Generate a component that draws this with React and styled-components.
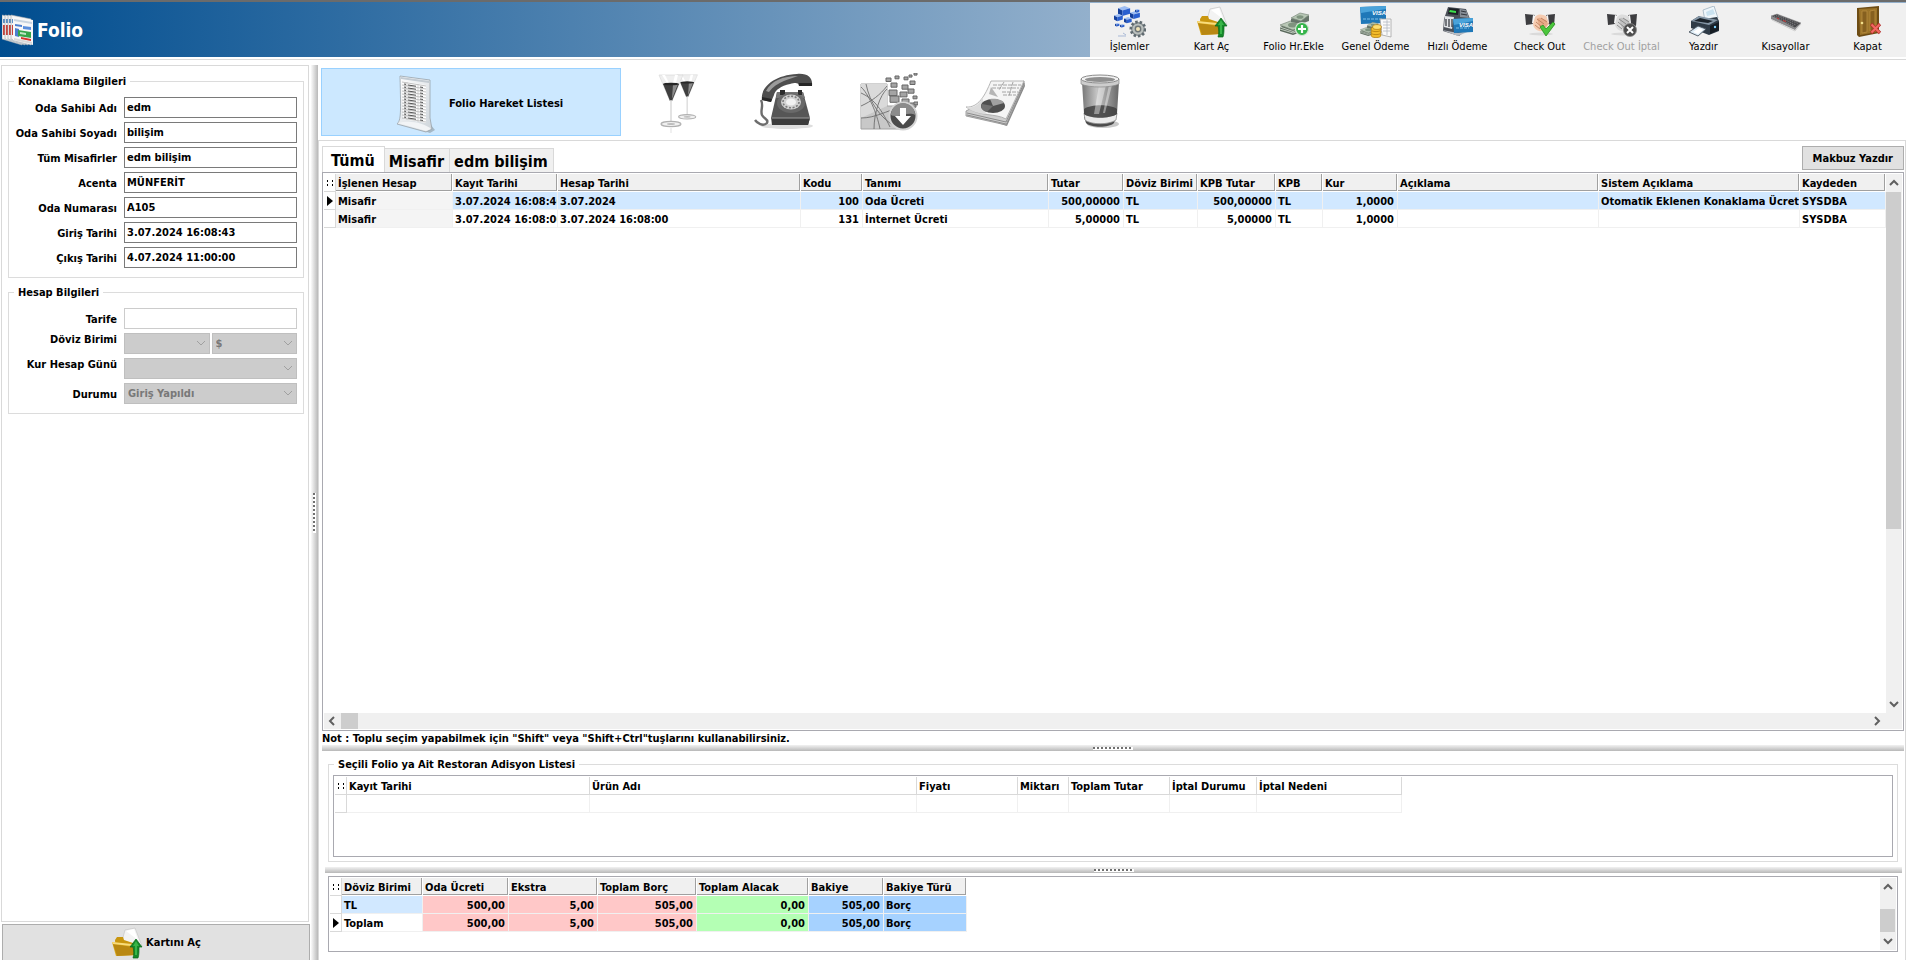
import React, { useState } from "react";
import styled, { createGlobalStyle, css } from "styled-components";

const GlobalStyle = createGlobalStyle`
  * {
    box-sizing: border-box;
  }
  body {
    margin: 0;
    background: #fff;
    color: #000;
    font-family: "DejaVu Sans Condensed", "DejaVu Sans", Tahoma, sans-serif;
    font-size: 11px;
    line-height: 14px;
  }
  button, input, select {
    font: inherit;
    color: inherit;
  }
`;

/* ---------- icons ---------- */

const FolioLogo = () => (
  <svg width="32" height="32" viewBox="0 0 32 32">
    {[0, 3, 6, 9].map((x) => (
      <g key={x}>
        <path d={`M${x} 1 L${x + 20} 5 V31 L${x} 25 Z`} fill="#f3f3f3" stroke="#9aa4ad" strokeWidth=".6" />
        <path d={`M${x + 1} 5h2v4h-2z`} fill="#5b8fc4" />
        <path d={`M${x + 1} 11h2v10h-2z`} fill="#c8443c" />
      </g>
    ))}
    <path d="M11 3 L31 6 V31 L11 26 Z" fill="#f7f7f7" />
    <path d="M12 5 L30 8 V10 L12 7 Z" fill="#c8d4e0" />
    <path d="M13 10 L20 11 V13 L13 12 Z M13 14 L17 15 V23 L13 22 Z" fill="#4c7fd0" />
    <path d="M21 12 L29 13 V16 L21 15 Z" fill="#5a8fdd" />
    <path d="M16 16 L29 18 V24 L16 22 Z" fill="#35a64a" />
    <path d="M18 18 L24 19 V21 L18 20 Z" fill="#bfe6c4" />
    <path d="M19 23 L29 25 V27 L19 25 Z" fill="#d3352c" />
    <path d="M12 24 L30 28 V30 L12 26 Z" fill="#d9d9d9" />
  </svg>
);

const Cube = ({ x, y, s }) => (
  <g transform={`translate(${x} ${y}) scale(${s})`}>
    <path d="M0 2 L6 0 L11 2 L4 4 Z" fill="#9dbdf3" />
    <path d="M0 2 L4 4 V9 L0 7 Z" fill="#143f9c" />
    <path d="M4 4 L11 2 V7 L4 9 Z" fill="#2a5fcf" />
  </g>
);

const OperationsIcon = () => (
  <svg width="32" height="32" viewBox="0 0 32 32">
    <Cube x={4} y={0} s={1.1} />
    <Cube x={16} y={5} s={0.9} />
    <Cube x={0} y={8} s={0.8} />
    <Cube x={10} y={11} s={0.7} />
    <Cube x={21} y={3} s={0.4} />
    <Cube x={1} y={17} s={0.4} />
    <Cube x={6} y={18} s={0.4} />
    <path d="M4 30 h8 M9 27l3 2" stroke="#a9b9d6" strokeWidth="1" />
    <circle cx="24" cy="23" r="7" fill="#8c9294" stroke="#5f6a70" strokeWidth="3" strokeDasharray="2.4 1.9" />
    <circle cx="24" cy="23" r="5.6" fill="#b9bfbd" />
    <circle cx="24" cy="23" r="3.4" fill="#6d7476" />
    <circle cx="24" cy="23" r="2" fill="#efe2b8" />
  </svg>
);

const FolderUpIcon = () => (
  <svg width="32" height="32" viewBox="0 0 32 32">
    <path d="M14 3 L24 1 L31 19 L18 24 L11 14 Z" fill="#f3f3f3" stroke="#c6c6c6" strokeWidth=".7" />
    <path d="M15 4 L23 2 L27 13 Z" fill="#fff" />
    <path d="M4 13 L6 10 H12 L13 13 L22 16 V26 L5 27 Z" fill="#c9960f" />
    <path d="M1 15 L22 18 L25 28 L5 29 Z" fill="#dba91b" />
    <path d="M2 17 L22 20 L25 28 L6 29 Z" fill="#b98812" />
    <path d="M1 15 L21 17 V19 L2 17 Z" fill="#f8dc7c" />
    <path d="M25 12 L31 20 H28 C28 25 28 28 27 31 L22 31 C23 28 23 24 22 20 H19 Z" fill="#15882a" stroke="#0a6718" strokeWidth=".7" />
    <path d="M25 14 L28 19 H26 V28 H24 V19 H22 Z" fill="#38b548" />
  </svg>
);

const Banknotes = () => (
  <g>
    <path d="M2 21 L15 15 L28 19 V24 L15 29 L2 25 Z" fill="#5b6a5d" />
    <path d="M2 19 L15 14 L28 18 L15 24 Z" fill="#b9c7b6" stroke="#7d8b7c" strokeWidth=".7" />
    <path d="M2 23 L15 27 L28 22 M2 21 L15 25.500 L28 20" stroke="#dbe3d8" strokeWidth=".8" fill="none" />
    <path d="M13 13 L22 8 L31 10 V15 L23 18 L13 16 Z" fill="#66756a" />
    <path d="M13 12 L22 7 L31 9 L23 15 Z" fill="#b6c6b4" stroke="#7d8b7c" strokeWidth=".7" />
    <ellipse cx="15" cy="19" rx="5" ry="2.500" fill="#7f947f" />
    <ellipse cx="22" cy="11" rx="3.500" ry="1.800" fill="#7f947f" />
  </g>
);

const CashAddIcon = () => (
  <svg width="32" height="32" viewBox="0 0 32 32">
    <Banknotes />
    <circle cx="24" cy="23" r="6.500" fill="#35b44a" stroke="#d7e5d8" strokeWidth="1.200" />
    <path d="M24 19v8M20 23h8" stroke="#fff" strokeWidth="2.200" />
  </svg>
);

const VisaCard = ({ x = 0, y = 0, w = 24, h = 15 }) => (
  <g transform={`translate(${x} ${y})`}>
    <path d={`M0 1 L${w} 0 V${h} L1 ${h + 1} Z`} fill="#1f78b8" />
    <path d={`M0 1 L${w} 0 V3 L1 7 Z`} fill="#4aa3da" />
    <path d={`M3 ${h - 4} H${w - 4}`} stroke="#7fbfe6" strokeWidth="1" strokeDasharray="3 1" />
    <text x={w - 14} y="9" fontSize="6" fontWeight="700" fontStyle="italic" fontFamily="Liberation Sans, sans-serif" fill="#fff">
      VISA
    </text>
  </g>
);

const GeneralPaymentIcon = () => (
  <svg width="34" height="32" viewBox="0 0 34 32">
    <VisaCard x={1} y={0} w={26} h={17} />
    <path d="M21 13 L32 13 V31 L23 29 Z" fill="#fafafa" stroke="#a5a5a5" strokeWidth=".8" />
    <path d="M24 16h7M24 19h7M24 22h7M24 25h7M28 14v15" stroke="#b3b9c2" strokeWidth=".8" />
    <g transform="translate(0 12) scale(.62)">
      <Banknotes />
    </g>
    {[29, 26, 23].map((y) => (
      <ellipse key={y} cx="17" cy={y} rx="5" ry="2.600" fill="#f2bb2b" stroke="#a87408" strokeWidth=".7" />
    ))}
    <ellipse cx="18" cy="21" rx="4.400" ry="2.400" fill="#ffdf72" stroke="#a87408" strokeWidth=".7" />
  </svg>
);

const FastPaymentIcon = () => (
  <svg width="34" height="32" viewBox="0 0 34 32">
    <path d="M7 1 L25 3 L29 13 L24 25 L18 30 L2 25 L3 13 Z" fill="#4b5058" />
    <path d="M8 2 L18 3 L17 9 L7 8 Z" fill="#1d2125" />
    <path d="M9 4 L15 5 V7 L8 6 Z" fill="#3ee04c" />
    <path d="M19 3 L25 4 L28 12 L19 11 Z" fill="#868d96" />
    <path d="M20 5 L25 6 M20 8 L26 9" stroke="#2f343a" strokeWidth="1" />
    <path d="M4 10 L13 11 L11 23 L3 21 Z" fill="#e2e4e7" />
    <path d="M5 13v7M8 13v8M11 13v8" stroke="#2c3036" strokeWidth="1.200" />
    <path d="M1 24 L17 30 L31 24 L17 27 Z" fill="#b8bcc2" />
    <VisaCard x={12} y={12} w={20} h={14} />
  </svg>
);

const Handshake = ({ skin, shade, line }) => (
  <g>
    <path d="M1 8 L11 9 L9 18 L2 19 Z" fill="#3d3d40" />
    <path d="M31 8 L22 9 L24 18 L30 20 Z" fill="#3d3d40" />
    <path d="M9 9 L12 10 L10 18 L8 17 Z M24 9 L22 10 L24 17 L25 17 Z" fill="#f7f7f7" />
    <path d="M11 11 C15 7 19 9 22 10 L25 17 C23 23 19 26 15 25 C12 24 9 21 9 18 Z" fill={skin} />
    <path d="M13 13 C16 10 18 13 22 14 L24 18 C22 22 19 23 16 22 Z" fill={shade} />
    <path d="M13 13 L20 18 M12 16 L18 21 M11 19 L16 23 M17 12 L23 16" stroke={line} strokeWidth=".8" fill="none" />
    <ellipse cx="17" cy="28" rx="12" ry="1.500" fill="#dadada" />
  </g>
);

const CheckOutIcon = () => (
  <svg width="32" height="32" viewBox="0 0 32 32">
    <Handshake skin="#f5cbb0" shade="#e8ab88" line="#b87654" />
    <path d="M16 21 L19 19 L22 23 L29 16 L31 18 L22 30 Z" fill="#4bc63c" stroke="#2b8f22" strokeWidth=".8" />
  </svg>
);

const CheckOutCancelIcon = () => (
  <svg width="32" height="32" viewBox="0 0 32 32">
    <Handshake skin="#dcdcdc" shade="#c2c2c2" line="#7c7c7c" />
    <circle cx="24" cy="24" r="6.500" fill="#4d4d4d" stroke="#8a8a8a" strokeWidth=".8" />
    <path d="M21 21l6 6M27 21l-6 6" stroke="#fff" strokeWidth="2" />
  </svg>
);

const PrinterIcon = () => (
  <svg width="34" height="32" viewBox="0 0 34 32">
    <path d="M16 4 L27 0 L31 12 L18 15 Z" fill="#eef6fb" stroke="#9fb3c0" strokeWidth=".8" />
    <path d="M19 6 L26 3 L28 8 L20 10 Z" fill="#c9e2f0" />
    <path d="M4 15 L12 10 L17 13 L30 11 L32 15 V25 L22 29 L4 22 Z" fill="#2e3b47" />
    <path d="M4 15 L12 10 L31 14 L22 19 Z" fill="#8496a6" />
    <path d="M7 15 L13 12 L26 15 L21 17 Z" fill="#1b242c" />
    <path d="M23 20 L32 16 V24 L23 28 Z" fill="#161d24" />
    <circle cx="28" cy="21" r="1.200" fill="#7fd2ff" />
    <path d="M2 26 L11 20 L19 23 L11 30 Z" fill="#dcebf5" stroke="#4a5560" strokeWidth=".9" />
    <path d="M6 26 L12 22 L16 24 L11 28 Z" fill="#fff" />
  </svg>
);

const KeyboardIcon = () => (
  <svg width="32" height="32" viewBox="0 0 32 32">
    <path d="M1 10 L7 8 L31 17 L25 24 L1 13 Z" fill="#8a8a8c" />
    <path d="M1 10 L7 8 L31 17 L25 22 Z" fill="#48484b" stroke="#a4a4a6" strokeWidth=".6" />
    <path d="M4 10.500 L24 20 M6 9.500 L26 19 M8 9 L28 17.500" stroke="#8b8b8f" strokeWidth=".8" strokeDasharray="1.500 1" />
    <path d="M7 12 l2 1 M13 14.500 l3 1" stroke="#c43a3a" strokeWidth="1.200" />
    <path d="M2 14 L25 25 L31 18" stroke="#d0d0d0" strokeWidth="1" fill="none" />
  </svg>
);

const DoorIcon = () => (
  <svg width="32" height="32" viewBox="0 0 32 32">
    <path d="M5 2 L27 0 V27 L7 31 L5 29 Z" fill="#6d4c14" />
    <path d="M7 3 L25 2 V26 L8 29 Z" fill="#9c7429" />
    <path d="M10 5 L15 5 V26 L10 27 Z M18 5 L23 4 V24 L18 25 Z" fill="#86601f" stroke="#b78d40" strokeWidth=".8" />
    <circle cx="10" cy="17" r="1.300" fill="#f3e08b" />
    <path d="M19 18l9 9M28 18l-9 9" stroke="#b5302c" strokeWidth="3.200" />
    <path d="M19.500 18.500l8 8M27.500 18.500l-8 8" stroke="#f26a64" strokeWidth="2" />
  </svg>
);

const ListIcon = () => (
  <svg width="40" height="60" viewBox="0 0 40 60">
    <defs>
      <linearGradient id="sheet" x1="0" y1="0" x2="1" y2="1">
        <stop offset="0" stopColor="#fff" />
        <stop offset="1" stopColor="#cdd4da" />
      </linearGradient>
    </defs>
    <path d="M4 49 L34 59 L39 56 L34 50 Z" fill="#a5b8c6" />
    <path d="M4 2 L34 6 L34 44 L36 55 L30 58 L1 50 C5 46 5 40 4 2 Z" fill="url(#sheet)" stroke="#98a2aa" strokeWidth=".8" />
    <path d="M5 3 L33 7 V9 L5 5 Z" fill="#c3cbd2" />
    <path d="M6 7 L30 11 V49 L7 45 Z" fill="#fdfdfd" />
    {[8, 11, 14, 17, 20, 23, 26, 29, 32, 35, 38, 41, 44].map((y) => (
      <path key={y} d={`M6 ${y} l24 4`} stroke="#a8a8a8" strokeWidth=".7" />
    ))}
    {[9, 12, 15, 18, 21, 24, 27, 30, 33, 36, 39, 42].map((y) => (
      <path key={y} d={`M8 ${y + 1} l2 .4 M12 ${y + 2} l8 1.200 M24 ${y + 4} l3 .5`} stroke="#555" strokeWidth="1.100" />
    ))}
    <path d="M11 8 V46 M22 10 V48" stroke="#bdbdbd" strokeWidth=".6" />
    <path d="M2 49 C14 46 28 49 35 55 L30 57 Z" fill="#f2f4f6" />
  </svg>
);

const GlassShape = () => (
  <g>
    <path d="M1 2 H25 L14 28 H12 Z" fill="#efefef" stroke="#dadada" strokeWidth=".7" />
    <path d="M5 11 H21 L14 28 H12 Z" fill="#3f3f3f" />
    <path d="M15 11 H20 L14 26 Z" fill="#8c8c8c" />
    <path d="M7 2 L11 10 H9 L4 2 Z M17 2h3l-2 8h-3z" fill="#fff" />
    <ellipse cx="13" cy="11" rx="8" ry="1.300" fill="#262626" />
    <path d="M13 27 V51" stroke="#dcdcdc" strokeWidth="1.600" />
    <ellipse cx="13" cy="51" rx="10" ry="2.600" fill="#f0f0f0" stroke="#b0b0b0" strokeWidth="1.200" />
    <ellipse cx="13" cy="51" rx="4" ry="1" fill="#bdbdbd" />
  </g>
);

const GlassesIcon = () => (
  <svg width="60" height="60" viewBox="0 0 60 60">
    <g transform="translate(29 0) scale(.86)">
      <GlassShape />
    </g>
    <g transform="translate(11 0)">
      <GlassShape />
    </g>
    <path d="M24 54 V60" stroke="#f0f0f0" strokeWidth="2" />
  </svg>
);

const PhoneIcon = () => (
  <svg width="60" height="60" viewBox="0 0 60 60">
    <ellipse cx="34" cy="53" rx="26" ry="3" fill="#dedede" />
    <path d="M8 27 C11 33 7 37 9 42 C11 46 16 46 14 50 C10 54 4 50 2 47" fill="none" stroke="#6d6d6d" strokeWidth="2.400" />
    <path d="M24 19 H50 L57 45 L55 52 H19 L18 45 Z" fill="#565656" />
    <path d="M19 45 H57 L55 52 H19 Z" fill="#3d3d3d" />
    <path d="M19 45 H57" stroke="#9a9a9a" strokeWidth="1" />
    <path d="M24 19 H50 L52 25 H23 Z" fill="#747474" />
    <path d="M27 22 V17 H32 V22 M45 22 V17 H49 V22" fill="#2c2c2c" />
    <ellipse cx="38" cy="30" rx="14" ry="10" fill="#696969" />
    <ellipse cx="38" cy="29" rx="10" ry="7.500" fill="#d2d2d2" />
    <ellipse cx="38" cy="29" rx="8" ry="5.800" fill="none" stroke="#7c7c7c" strokeWidth="1.600" strokeDasharray="2 1.600" />
    <ellipse cx="38" cy="29" rx="5" ry="3.600" fill="#f2f2f2" />
    <path d="M9 27 C7 14 22 2 44 1 C55 0 60 5 59 13 L46 13 C45 9 42 10 37 11 C28 13 22 17 21 22 L18 29 Z" fill="#4e4e4e" />
    <path d="M13 18 C18 8 30 3 45 3 C38 6 24 8 16 19 Z" fill="#9b9b9b" />
    <path d="M46 10 H59 V13 H46 Z M9 24 L19 26 L18 29 L9 27 Z" fill="#272727" />
  </svg>
);

const NetworkIcon = () => (
  <svg width="58" height="60" viewBox="0 0 58 60">
    <path d="M1 11 H27 V33 H44 V56 H1 Z" fill="#c8c8c8" stroke="#a2a2a2" strokeWidth="1" />
    <path d="M1 11 H27 V33 L1 45 Z" fill="#dadada" />
    <path
      d="M1 20 C12 25 20 33 30 54 M1 33 C12 28 20 22 27 13 M6 11 C10 30 20 45 36 54 M1 45 C15 45 27 38 40 34 M14 56 C14 40 20 22 27 16 M20 56 C17 40 8 20 1 14"
      fill="none"
      stroke="#6e6e6e"
      strokeWidth=".9"
    />
    {[
      [26, 5, 5], [35, 3, 4], [44, 4, 4], [49, 2, 3], [54, 0, 3], [31, 10, 6], [42, 12, 6], [50, 8, 5],
      [29, 17, 8], [40, 19, 7], [48, 16, 6], [30, 23, 9], [42, 26, 7], [53, 23, 4], [50, 30, 6], [54, 29, 4],
    ].map(([x, y, s]) => (
      <path key={`${x}-${y}`} d={`M${x} ${y} h${s} v${s * 0.7} h-${s} z`} fill="#a4a4a4" stroke="#676767" strokeWidth="1" />
    ))}
    <circle cx="43" cy="43" r="13.500" fill="#4b4b4b" stroke="#d4d4d4" strokeWidth="2" />
    <path d="M31 42 A12 12 0 0 1 55 42 C48 38 38 46 31 42 Z" fill="#8c8c8c" />
    <path d="M40 35 H46 V43 H51 L43 52 L35 43 H40 Z" fill="#fff" />
  </svg>
);

const ReportIcon = () => (
  <svg width="60" height="60" viewBox="0 0 60 60">
    <path d="M2 40 L42 53 L60 13 L59 9 L40 44 Z" fill="#8a8a8a" />
    <path d="M1 38 V43 L41 52 L59 12 V8 Z" fill="#cfcfcf" stroke="#8e8e8e" strokeWidth=".8" />
    <path d="M2 40 L41 49 L59 10 M2 42 L41 51" fill="none" stroke="#7a7a7a" strokeWidth=".8" />
    <path d="M26 8 L59 8 L41 46 C30 40 15 44 1 34 C13 35 20 23 26 8 Z" fill="#f5f5f5" stroke="#a5a5a5" strokeWidth=".8" />
    <path d="M1 34 C10 36 15 30 18 24 C18 32 18 38 22 41 C14 41 6 38 1 34 Z" fill="#dcdcdc" />
    <path d="M28 12 H56 M27 15 H54 M37 19 H53 M38 22 H51 M39 9 L34 17 M48 9 L44 23" stroke="#9c9c9c" strokeWidth=".9" strokeDasharray="4 1" />
    <ellipse cx="28" cy="33" rx="12" ry="7" fill="#4f4f4f" />
    <path d="M28 33 L25 26 C31 25 38 27 39 30 Z" fill="#a0a0a0" />
    <path d="M28 33 L22 39 C17 38 15 34 17 31 Z" fill="#717171" />
    <path d="M26 14 L24 21 L33 24 Z" fill="#b5b5b5" />
  </svg>
);

const TrashIcon = () => (
  <svg width="44" height="60" viewBox="0 0 44 60">
    <defs>
      <linearGradient id="bin" x1="0" x2="1">
        <stop offset="0" stopColor="#777" />
        <stop offset=".4" stopColor="#c4c4c4" />
        <stop offset="1" stopColor="#686868" />
      </linearGradient>
    </defs>
    <ellipse cx="24" cy="51" rx="16" ry="4" fill="#c8c8c8" />
    <path d="M5 44 H37 L35 50 C30 55 12 55 7 50 Z" fill="#4b4b4b" />
    <path d="M5 40 H38 L37 47 C30 52 12 52 6 47 Z" fill="#eaeaea" stroke="#8c8c8c" strokeWidth=".8" />
    <path d="M3 9 H40 L38 41 C30 46 12 46 5 41 Z" fill="url(#bin)" />
    <path d="M5 36 C12 31 31 31 38 36 V41 C30 46 12 46 5 41 Z" fill="#3f3f3f" opacity=".85" />
    <path d="M20 12 H27 L20 41 H15 Z M30 12 H33 L26 40 H24 Z" fill="#fff" opacity=".4" />
    <path d="M2 6 V11 C10 15 32 15 40 11 V6 Z" fill="#cdcdcd" stroke="#8a8a8a" strokeWidth=".7" />
    <ellipse cx="21" cy="6" rx="19" ry="4" fill="#f2f2f2" stroke="#8a8a8a" />
    <ellipse cx="21" cy="6.500" rx="15" ry="2.600" fill="#8f8f8f" />
  </svg>
);

const Chevron = ({ dir, color = "#606060", width = 2 }) => {
  const paths = {
    up: "M1 7 L5 3 L9 7",
    down: "M1 3 L5 7 L9 3",
    left: "M7 1 L3 5 L7 9",
    right: "M3 1 L7 5 L3 9",
  };
  return (
    <svg width="10" height="10" viewBox="0 0 10 10">
      <path d={paths[dir]} fill="none" stroke={color} strokeWidth={width} />
    </svg>
  );
};

const GridDots = () => (
  <svg width="8" height="8" viewBox="0 0 8 8">
    <path d="M1 1h1v2h-1zM6 1h1v2h-1zM1 5h1v2h-1zM6 5h1v2h-1z" fill="#000" />
  </svg>
);

const RowArrow = () => (
  <svg width="6" height="10" viewBox="0 0 6 10">
    <path d="M0 0 L6 5 L0 10 Z" fill="#000" />
  </svg>
);

/* ---------- data ---------- */

const toolbar = [
  { label: "İşlemler", Icon: OperationsIcon },
  { label: "Kart Aç", Icon: FolderUpIcon },
  { label: "Folio Hr.Ekle", Icon: CashAddIcon },
  { label: "Genel Ödeme", Icon: GeneralPaymentIcon },
  { label: "Hızlı Ödeme", Icon: FastPaymentIcon },
  { label: "Check Out", Icon: CheckOutIcon },
  { label: "Check Out İptal", Icon: CheckOutCancelIcon, disabled: true },
  { label: "Yazdır", Icon: PrinterIcon },
  { label: "Kısayollar", Icon: KeyboardIcon },
  { label: "Kapat", Icon: DoorIcon },
];

const stayFields = [
  ["ad", "Oda Sahibi Adı", "edm"],
  ["soyad", "Oda Sahibi Soyadı", "bilişim"],
  ["misafirler", "Tüm Misafirler", "edm bilişim"],
  ["acenta", "Acenta", "MÜNFERİT"],
  ["oda", "Oda Numarası", "A105"],
  ["giris", "Giriş Tarihi", "3.07.2024 16:08:43"],
  ["cikis", "Çıkış Tarihi", "4.07.2024 11:00:00"],
];

const views = [
  { label: "Restoran", Icon: GlassesIcon },
  { label: "Telefon", Icon: PhoneIcon },
  { label: "İnternet", Icon: NetworkIcon },
  { label: "Rapor", Icon: ReportIcon },
  { label: "Silinenler", Icon: TrashIcon },
];

const tabs = ["Tümü", "Misafir", "edm bilişim"];

const folioColumns = [
  { title: "İşlenen Hesap", width: 117, tint: "#f4f4f4" },
  { title: "Kayıt Tarihi", width: 105 },
  { title: "Hesap Tarihi", width: 243 },
  { title: "Kodu", width: 62, right: true },
  { title: "Tanımı", width: 186 },
  { title: "Tutar", width: 75, right: true },
  { title: "Döviz Birimi", width: 74 },
  { title: "KPB Tutar", width: 78, right: true },
  { title: "KPB", width: 47 },
  { title: "Kur", width: 75, right: true },
  { title: "Açıklama", width: 201 },
  { title: "Sistem Açıklama", width: 201 },
  { title: "Kaydeden" },
];

const folioRows = [
  ["Misafir", "3.07.2024 16:08:46", "3.07.2024", "100", "Oda Ücreti", "500,00000", "TL", "500,00000", "TL", "1,0000", "", "Otomatik Eklenen Konaklama Ücreti", "SYSDBA"],
  ["Misafir", "3.07.2024 16:08:00", "3.07.2024 16:08:00", "131", "İnternet Ücreti", "5,00000", "TL", "5,00000", "TL", "1,0000", "", "", "SYSDBA"],
];

const billColumns = [
  { title: "Kayıt Tarihi", width: 243 },
  { title: "Ürün Adı", width: 327 },
  { title: "Fiyatı", width: 101 },
  { title: "Miktarı", width: 51 },
  { title: "Toplam Tutar", width: 101 },
  { title: "İptal Durumu", width: 87 },
  { title: "İptal Nedeni", width: 145 },
];

const totalColumns = [
  { title: "Döviz Birimi", width: 81 },
  { title: "Oda Ücreti", width: 86, right: true, tint: "#ffc8c8" },
  { title: "Ekstra", width: 89, right: true, tint: "#ffc8c8" },
  { title: "Toplam Borç", width: 99, right: true, tint: "#ffc8c8" },
  { title: "Toplam Alacak", width: 112, right: true, tint: "#b4ffb4" },
  { title: "Bakiye", width: 75, right: true, tint: "#a6d2ff" },
  { title: "Bakiye Türü", width: 83, tint: "#a6d2ff" },
];

const totalRows = [
  ["TL", "500,00", "5,00", "505,00", "0,00", "505,00", "Borç"],
  ["Toplam", "500,00", "5,00", "505,00", "0,00", "505,00", "Borç"],
];

/* ---------- parts ---------- */

const DataGrid = ({ columns, rows, current, selected, flat }) => (
  <Table $fluid={columns.some((c) => !c.width)}>
    <colgroup>
      <Col $width={12} />
      {columns.map((c) => (
        <Col key={c.title} $width={c.width} />
      ))}
    </colgroup>
    <thead>
      <tr>
        <MarkHead>
          <GridDots />
        </MarkHead>
        {columns.map((c) => (
          <HeadCell key={c.title} $flat={flat}>
            {c.title}
          </HeadCell>
        ))}
      </tr>
    </thead>
    <tbody>
      {rows.map((row, r) => (
        <tr key={r}>
          <MarkCell>{r === current && <RowArrow />}</MarkCell>
          {row.map((value, i) => (
            <Cell
              key={columns[i].title}
              $right={columns[i].right}
              $tint={columns[i].tint || (r === selected ? "#d1e8ff" : "#fff")}
            >
              {value}
            </Cell>
          ))}
        </tr>
      ))}
    </tbody>
  </Table>
);

const VerticalScroll = ({ before, thumb }) => (
  <VScroll>
    <Chevron dir="up" />
    <VTrack>
      <VGap $grow={before} />
      <VThumb $grow={thumb} />
      <VGap $grow={100 - before - thumb} />
    </VTrack>
    <Chevron dir="down" />
  </VScroll>
);

const Combo = ({ id, label, value = "" }) => (
  <ComboBox>
    <Select id={id} aria-label={label} defaultValue={value} disabled>
      <option value={value}>{value}</option>
    </Select>
    <ComboArrow>
      <Chevron dir="down" color="#a0a0a0" width={1} />
    </ComboArrow>
  </ComboBox>
);

function App() {
  const [tab, setTab] = useState("Tümü");

  return (
    <Page>
      <GlobalStyle />
      <Header>
        <Title>
          <FolioLogo />
          Folio
        </Title>
        <Toolbar>
          {toolbar.map(({ label, Icon, disabled }) => (
            <ToolButton key={label} disabled={disabled}>
              <Icon />
              {label}
            </ToolButton>
          ))}
        </Toolbar>
      </Header>

      <Main>
        <Sidebar>
          <SidePanel>
            <Group>
              <Legend>Konaklama Bilgileri</Legend>
              {stayFields.map(([id, label, value]) => (
                <Field key={id}>
                  <Label htmlFor={id}>{label}</Label>
                  <Input id={id} defaultValue={value} />
                </Field>
              ))}
            </Group>

            <Group>
              <Legend>Hesap Bilgileri</Legend>
              <Field>
                <Label htmlFor="tarife">Tarife</Label>
                <Input id="tarife" disabled />
              </Field>
              <Field $top>
                <Label htmlFor="doviz">Döviz Birimi</Label>
                <Combo id="doviz" />
                <Combo id="sembol" label="Sembol" value="$" />
              </Field>
              <Field $top>
                <Label htmlFor="kur">Kur Hesap Günü</Label>
                <Combo id="kur" />
              </Field>
              <Field>
                <Label htmlFor="durum">Durumu</Label>
                <Combo id="durum" value="Giriş Yapıldı" />
              </Field>
            </Group>
          </SidePanel>
          <CardButton>
            <FolderUpIcon />
            Kartını Aç
          </CardButton>
        </Sidebar>

        <ColumnSplitter>
          <ColumnGrip />
        </ColumnSplitter>

        <Content>
          <ViewBar>
            <ListViewButton>
              <ListIcon />
              Folio Hareket Listesi
            </ListViewButton>
            {views.map(({ label, Icon }) => (
              <ViewButton key={label} aria-label={label}>
                <Icon />
              </ViewButton>
            ))}
          </ViewBar>

          <Workspace>
            <TabRow>
              {tabs.map((name) => (
                <Tab key={name} $active={name === tab} onClick={() => setTab(name)}>
                  {name}
                </Tab>
              ))}
              <ReceiptButton>Makbuz Yazdır</ReceiptButton>
            </TabRow>

            <FolioFrame>
              <FolioBody>
                <GridArea>
                  <DataGrid columns={folioColumns} rows={folioRows} current={0} selected={0} />
                </GridArea>
                <VerticalScroll before={0} thumb={67} />
              </FolioBody>
              <HScroll>
                <Chevron dir="left" />
                <HTrack>
                  <HThumb />
                </HTrack>
                <Chevron dir="right" />
              </HScroll>
            </FolioFrame>
            <Note>Not : Toplu seçim yapabilmek için "Shift" veya "Shift+Ctrl"tuşlarını kullanabilirsiniz.</Note>

            <RowSplitter>
              <RowGrip />
            </RowSplitter>

            <BillGroup>
              <Legend>Seçili Folio ya Ait Restoran Adisyon Listesi</Legend>
              <BillFrame>
                <DataGrid columns={billColumns} rows={[["", "", "", "", "", "", ""]]} flat />
              </BillFrame>
            </BillGroup>

            <RowSplitter $inset>
              <RowGrip />
            </RowSplitter>

            <TotalFrame>
              <GridArea>
                <DataGrid columns={totalColumns} rows={totalRows} current={1} selected={0} />
              </GridArea>
              <VerticalScroll before={35} thumb={65} />
            </TotalFrame>
          </Workspace>
        </Content>
      </Main>
    </Page>
  );
}

/* ---------- styles ---------- */

const Page = styled.div`
  display: flex;
  flex-direction: column;
  height: 100vh;
  overflow: hidden;
`;

const Header = styled.header`
  display: flex;
  flex: none;
  height: 57px;
  border-top: 2px solid #6b6b6b;
  background: linear-gradient(90deg, #004d8f, #93b0cc 1090px);
`;

const Title = styled.h1`
  display: flex;
  flex: 1;
  align-items: center;
  gap: 3px;
  margin: 0;
  padding-left: 2px;
  color: #fff;
  font-size: 19px;
  line-height: 24px;
`;

const Toolbar = styled.div`
  display: flex;
  justify-content: center;
  width: 816px;
  margin-top: 1px;
  background: #f0f0f0;
  overflow: hidden;
`;

const ToolButton = styled.button`
  display: flex;
  flex: none;
  flex-direction: column;
  align-items: center;
  gap: 2px;
  width: 82px;
  padding: 3px 0 0 1px;
  border: 0;
  background: none;
  white-space: nowrap;
  &:disabled {
    color: #a0a0a0;
  }
`;

const Main = styled.main`
  display: flex;
  flex: 1;
  min-height: 0;
  margin-top: 2px;
  padding-top: 5px;
  border-top: 1px solid #d9d9d9;
  font-weight: bold;
`;

const Sidebar = styled.aside`
  display: flex;
  flex: none;
  flex-direction: column;
  width: 311px;
  padding: 0 2px 0 1px;
`;

const SidePanel = styled.div`
  display: flex;
  flex: 1;
  flex-direction: column;
  gap: 6px;
  margin-bottom: 2px;
  padding: 7px 4px 0 6px;
  border: 1px solid #d9d9d9;
`;

const groupFrame = css`
  min-width: 0;
  border: 1px solid #dcdcdc;
`;

const Group = styled.fieldset`
  ${groupFrame}
  margin: 0;
  padding: 8px 6px 9px 0;
`;

const Legend = styled.legend`
  margin-left: 5px;
  padding: 2px 4px 0;
`;

const Label = styled.label`
  width: 113px;
  padding: 2px 5px 0 0;
  text-align: right;
  white-space: nowrap;
`;

const Field = styled.div`
  display: flex;
  align-items: center;
  gap: 2px;
  & + & {
    margin-top: 4px;
  }
  ${({ $top }) =>
    $top &&
    css`
      align-items: flex-start;
      ${Label} {
        padding-top: 0;
      }
    `}
`;

const Input = styled.input`
  flex: 1;
  min-width: 0;
  height: 21px;
  padding: 0 2px 1px;
  border: 1px solid #7a7a7a;
  background: #fff;
  &:disabled {
    border-color: #ccc;
  }
`;

const ComboBox = styled.div`
  position: relative;
  flex: 1;
`;

const Select = styled.select`
  display: block;
  width: 100%;
  height: 21px;
  padding: 1px 3px 0;
  border: 1px solid #bfbfbf;
  border-radius: 0;
  background: #ccc;
  color: #787878;
  opacity: 1;
  appearance: none;
`;

const ComboArrow = styled.span`
  position: absolute;
  top: 5px;
  right: 4px;
  line-height: 10px;
  pointer-events: none;
`;

const CardButton = styled.button`
  display: flex;
  align-items: center;
  justify-content: center;
  gap: 3px;
  height: 36px;
  margin: 0 -1px 0 1px;
  padding-top: 2px;
  border: 1px solid #adadad;
  border-bottom: 0;
  background: #e1e1e1;
  font-weight: bold;
`;

const ColumnSplitter = styled.div`
  display: flex;
  flex: none;
  align-items: center;
  justify-content: center;
  width: 7px;
  background: linear-gradient(90deg, #fafafa, #b8b8b8);
`;

const ColumnGrip = styled.div`
  width: 3px;
  height: 40px;
  border-right: 1px solid #fff;
  background: repeating-linear-gradient(#707070 0 2px, #fff 2px 4px);
`;

const Content = styled.section`
  display: flex;
  flex: 1;
  flex-direction: column;
  min-width: 0;
`;

const ViewBar = styled.nav`
  display: flex;
  flex: none;
  height: 75px;
  padding: 3px 3px 4px;
`;

const ListViewButton = styled.button`
  display: flex;
  align-items: center;
  gap: 13px;
  width: 300px;
  margin-right: 3px;
  padding: 4px 0 0 74px;
  border: 1px solid #99d1ff;
  background: #cce8ff;
  font-weight: bold;
`;

const ViewButton = styled.button`
  display: flex;
  align-items: center;
  justify-content: center;
  width: 106px;
  padding: 2px 0 0;
  border: 0;
  background: none;
`;

const Workspace = styled.div`
  display: flex;
  flex: 1;
  flex-direction: column;
  min-height: 0;
  padding: 5px 1px 8px 3px;
  border: 1px solid #d9d9d9;
  border-bottom: 0;
`;

const TabRow = styled.div`
  display: flex;
  align-items: flex-end;
  height: 26px;
`;

const Tab = styled.button`
  height: ${({ $active }) => ($active ? "26px" : "24px")};
  padding: ${({ $active }) => ($active ? "2px 9px 0 8px" : "2px 5px 0 4px")};
  border: 1px solid #d9d9d9;
  border-bottom: 0;
  background: ${({ $active }) => ($active ? "#fff" : "#f0f0f0")};
  font-size: 16px;
  font-weight: bold;
  & + & {
    border-left: 0;
  }
`;

const ReceiptButton = styled.button`
  align-self: flex-start;
  height: 24px;
  margin-left: auto;
  padding: 2px 10px 0;
  border: 1px solid #adadad;
  background: #e1e1e1;
  font-weight: bold;
`;

const frame = css`
  border: 1px solid #a9a9b0;
  background: #fff;
`;

const FolioFrame = styled.div`
  ${frame}
  display: flex;
  flex: 1;
  flex-direction: column;
  min-height: 0;
  padding: 1px;
`;

const FolioBody = styled.div`
  display: flex;
  flex: 1;
  min-height: 0;
`;

const GridArea = styled.div`
  flex: 1;
  min-width: 0;
  overflow: hidden;
`;

const Table = styled.table`
  width: ${({ $fluid }) => ($fluid ? "100%" : "1px")};
  table-layout: fixed;
  border-collapse: separate;
  border-spacing: 0;
`;

const Col = styled.col`
  width: ${({ $width }) => ($width ? `${$width}px` : "auto")};
`;

const cellBase = css`
  height: 18px;
  padding: 2px 0 0 2px;
  overflow: hidden;
  white-space: nowrap;
`;

const HeadCell = styled.th`
  ${cellBase}
  border-right: 1px solid #fff;
  border-bottom: 1px solid #fff;
  background: #f0f0f0;
  box-shadow: inset -1px -1px #a0a0a0;
  text-align: left;
  ${({ $flat }) =>
    $flat &&
    css`
      border-color: #d9d9d9;
      background: #fff;
      box-shadow: none;
    `}
`;

const MarkHead = styled.th`
  ${cellBase}
  border-right: 1px solid #d9d9d9;
  border-bottom: 1px solid #d9d9d9;
  padding-left: 1px;
  line-height: 8px;
`;

const MarkCell = styled.td`
  ${cellBase}
  border-right: 1px solid #d9d9d9;
  border-bottom: 1px solid #d9d9d9;
  padding-left: 3px;
  line-height: 10px;
`;

const Cell = styled.td`
  ${cellBase}
  ${({ $right }) =>
    $right &&
    css`
      padding-right: 3px;
      text-align: right;
    `}
  border-right: 1px solid #f0f0f0;
  border-bottom: 1px solid #f0f0f0;
  background: ${({ $tint }) => $tint};
`;

const VScroll = styled.div`
  display: flex;
  flex: none;
  flex-direction: column;
  align-items: center;
  width: 16px;
  padding: 4px 0;
  background: #f0f0f0;
  line-height: 10px;
`;

const VTrack = styled.div`
  display: flex;
  flex: 1;
  flex-direction: column;
  width: 100%;
  padding: 4px 1px 4px 0;
`;

const VGap = styled.div`
  flex: ${({ $grow }) => $grow} 0 0;
`;

const VThumb = styled.div`
  flex: ${({ $grow }) => $grow} 0 0;
  background: #cdcdcd;
`;

const HScroll = styled.div`
  display: flex;
  flex: none;
  align-items: center;
  height: 16px;
  padding: 0 20px 0 3px;
  background: #f0f0f0;
  line-height: 10px;
`;

const HTrack = styled.div`
  flex: 1;
  padding-left: 4px;
`;

const HThumb = styled.div`
  width: 17px;
  height: 16px;
  background: #cdcdcd;
`;

const Note = styled.p`
  height: 14px;
  margin: 0;
  line-height: 16px;
`;

const RowSplitter = styled.div`
  display: flex;
  flex: none;
  align-items: center;
  justify-content: center;
  height: 6px;
  margin: ${({ $inset }) => ($inset ? "5px 2px 3px 3px" : "0 0 5px")};
  background: linear-gradient(#f2f2f2, #b8b8b8);
`;

const RowGrip = styled.div`
  width: 40px;
  height: 3px;
  border-bottom: 1px solid #fff;
  background: repeating-linear-gradient(90deg, #707070 0 2px, #fff 2px 4px);
`;

const BillGroup = styled.fieldset`
  ${groupFrame}
  flex: none;
  margin: 0 6px;
  padding: 3px 0 4px;
`;

const BillFrame = styled.div`
  ${frame}
  height: 82px;
  margin: 0 4px;
  padding: 1px;
`;

const TotalFrame = styled.div`
  ${frame}
  display: flex;
  flex: none;
  height: 76px;
  margin: 0 6px;
  padding: 1px;
`;

export default App;
